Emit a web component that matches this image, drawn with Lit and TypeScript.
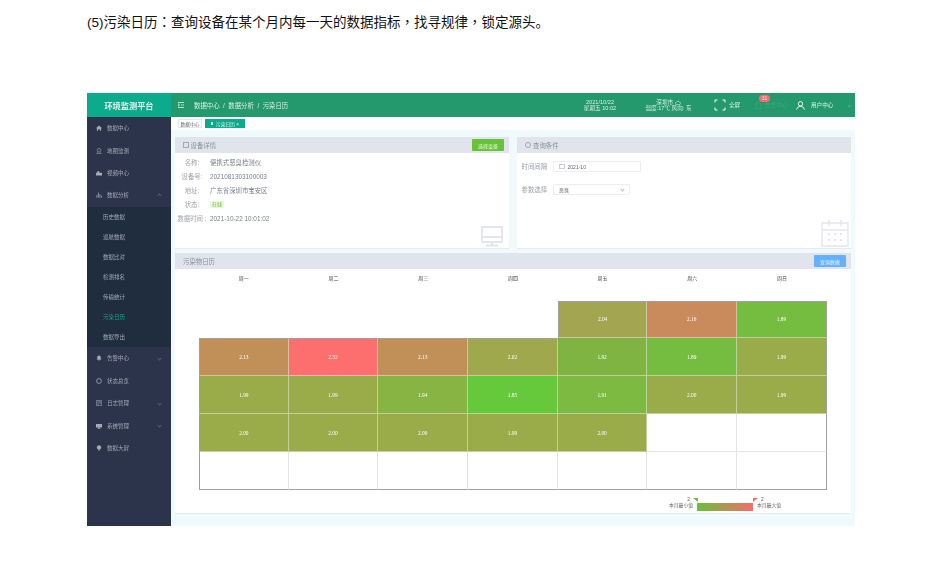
import { LitElement, html, css, svg } from 'lit';
import { customElement } from 'lit/decorators.js';

const menuIcons: Record<string, unknown> = {
  home: svg`<path d="M0 5.500 5 1l5 4.500H8.500V9.500h-2V7h-3v2.500h-2V5.500z" fill="currentColor"/>`,
  map: svg`<circle cx="5" cy="3.800" r="3" fill="none" stroke="currentColor"/><path d="M1 9.500h8M3 7l-1 2.500M7 7l1 2.500" stroke="currentColor" fill="none"/>`,
  video: svg`<path d="M0 4.500h10V9H0zM2 2h3.500v2.500H2z" fill="currentColor"/>`,
  chart: svg`<path d="M1.500 5v4.500M4 1v8.500M6.500 3.500v6M9 6v3.500" stroke="currentColor" stroke-width="1.300"/>`,
  bell: svg`<path d="M5 1a3 3 0 0 1 3 3v3l1 1H1l1-1V4a3 3 0 0 1 3-3zM4 9h2v1H4z" fill="currentColor"/>`,
  status: svg`<circle cx="5" cy="5" r="4" fill="none" stroke="currentColor" stroke-width="1.300"/>`,
  log: svg`<path d="M1 .5h8v9H1zM3.500 .5v9M5 3h3M5 5h3" fill="none" stroke="currentColor"/>`,
  system: svg`<path d="M0 1.500h10v6H0zM3 8h4v1.500H3z" fill="currentColor"/>`,
  screen: svg`<circle cx="5" cy="4.200" r="3.600" fill="currentColor"/><path d="M5 7v3" stroke="currentColor" stroke-width="1.500"/>`,
};

const menuTop = [
  { label: '数据中心', icon: 'home' },
  { label: '地图监测', icon: 'map' },
  { label: '视频中心', icon: 'video' },
];
const subItems = ['历史数据', '巡航数据', '数据比对', '检测排名', '传输统计', '污染日历', '数据导出'];
const menuBottom = [
  { label: '告警中心', icon: 'bell', arrow: true },
  { label: '状态总览', icon: 'status' },
  { label: '日志管理', icon: 'log', arrow: true },
  { label: '系统管理', icon: 'system', arrow: true },
  { label: '数据大屏', icon: 'screen' },
];
const crumbs = ['数据中心', '数据分析', '污染日历'];
const weekdays = ['周一', '周二', '周三', '周四', '周五', '周六', '周日'];

type Cell = [string, string] | null;
const days: Cell[] = [
  null, null, null, null, ['2.04', '#a4a550'], ['2.16', '#c98a5c'], ['1.89', '#74bd40'],
  ['2.13', '#c19058'], ['2.32', '#fd6e6e'], ['2.13', '#c19058'], ['2.02', '#9fa84c'], ['1.92', '#7fb443'], ['1.89', '#74bd40'], ['1.99', '#9aab49'],
  ['1.99', '#9aab49'], ['1.99', '#9aab49'], ['1.94', '#88b444'], ['1.85', '#66c93c'], ['1.91', '#7cba42'], ['2.00', '#9aab49'], ['1.99', '#9aab49'],
  ['2.00', '#9aab49'], ['2.00', '#9aab49'], ['2.00', '#9aab49'], ['1.99', '#9aab49'], ['2.00', '#9aab49'], null, null,
  null, null, null, null, null, null, null,
];

@customElement('app-root')
export class AppRoot extends LitElement {
  static styles = css`
    :host {
      display: block;
      width: 944px;
      height: 564px;
      background: #fff;
      font-family: "Liberation Sans", "Noto Sans CJK SC", sans-serif;
      overflow: hidden;
    }
    .caption {
      height: 93px;
      box-sizing: border-box;
      padding: 14px 0 0 87px;
      font-family: "Liberation Sans", "Noto Sans CJK TC", sans-serif;
      font-size: 13.5px;
      line-height: 18px;
      color: #111;
    }
    .caption span {
      font-family: "Liberation Sans", "Noto Sans CJK SC", sans-serif;
    }
    .frame {
      margin-left: 87px;
      width: 768px;
      height: 433px;
      display: flex;
      background: #f0f9fc;
      filter: blur(0.5px);
    }
    .side {
      width: 84px;
      flex: none;
      background: #2b344a;
      color: #a5abb8;
      font-size: 5.500px;
    }
    .logo {
      height: 24px;
      background: #0cab8b;
      color: #e4f5ee;
      font-size: 8.200px;
      font-weight: bold;
      display: flex;
      align-items: center;
      justify-content: center;
    }
    .item {
      height: 22.4px;
      display: flex;
      align-items: center;
      gap: 5px;
      padding-left: 9px;
      padding-right: 10px;
    }
    .item svg {
      width: 6px;
      height: 6px;
      flex: none;
    }
    .item span {
      flex: 1;
    }
    .arrow {
      width: 2px;
      height: 2px;
      border-right: 0.6px solid #566072;
      border-bottom: 0.6px solid #566072;
      transform: rotate(45deg);
    }
    .arrow.up {
      transform: rotate(225deg);
    }
    .sub {
      background: #1f2d3f;
    }
    .sub div {
      height: 20.1px;
      display: flex;
      align-items: center;
      padding-left: 16px;
    }
    .sub .on {
      color: #0cab8b;
    }
    .main {
      flex: 1;
      min-width: 0;
      display: flex;
      flex-direction: column;
    }
    .top {
      height: 24px;
      flex: none;
      background: #23996d;
      color: #dcefe7;
      font-size: 5.600px;
      display: flex;
      align-items: center;
      padding-left: 7px;
    }
    .crumbs {
      margin-left: 10px;
      width: 376px;
      font-size: 6.400px;
    }
    .crumbs i {
      font-style: normal;
      margin: 0 3.500px;
    }
    .clock,
    .weather {
      width: 60px;
      text-align: center;
      line-height: 6px;
    }
    .weather {
      margin-left: 8.500px;
    }
    .weather svg {
      vertical-align: -0.5px;
    }
    .full {
      display: flex;
      align-items: center;
      gap: 3px;
      margin-left: 15.500px;
      width: 41px;
    }
    .alarm {
      position: relative;
      display: flex;
      align-items: center;
      gap: 3px;
      color: #3aa96f;
      width: 41px;
    }
    .badge {
      position: absolute;
      left: 4px;
      top: -6px;
      width: 11px;
      height: 7px;
      border-radius: 4px;
      background: #f56c6c;
      color: #fde;
      font-size: 5px;
      line-height: 7px;
      text-align: center;
    }
    .user {
      display: flex;
      align-items: center;
      gap: 6px;
    }
    .user .arrow {
      margin-left: 9px;
      border-color: #4fae86;
    }
    .tabs {
      height: 13px;
      flex: none;
      box-sizing: border-box;
      background: #fff;
      display: flex;
      align-items: center;
      gap: 3px;
      padding-left: 7px;
      font-size: 4.800px;
    }
    .tab {
      height: 9px;
      width: 24px;
      box-sizing: border-box;
      display: flex;
      align-items: center;
      justify-content: center;
      border: 1px solid #e4e8ee;
      color: #666;
    }
    .tab.on {
      width: 40px;
      gap: 2.500px;
      background: #0cab8b;
      border-color: #0cab8b;
      color: #e4f5ee;
    }
    .tab i {
      width: 2.500px;
      height: 2.500px;
      border-radius: 50%;
      background: #fff;
    }
    .body {
      flex: 1;
      padding: 7px 4px 12px;
      display: flex;
      flex-direction: column;
      gap: 4px;
      min-height: 0;
    }
    .row {
      display: flex;
      gap: 8px;
      height: 112px;
      flex: none;
    }
    .panel {
      background: #fff;
      position: relative;
      display: flex;
      flex-direction: column;
      box-sizing: border-box;
      border-bottom: 1px solid #e6eaf0;
    }
    .panel.half {
      width: 334px;
    }
    .panel.calendar {
      flex: 1;
      min-height: 0;
    }
    .head {
      height: 16px;
      flex: none;
      background: #e1e4ec;
      color: #8a8f99;
      font-size: 6.400px;
      display: flex;
      align-items: center;
      justify-content: space-between;
      padding: 0 5px 0 8px;
    }
    .head b {
      font-weight: normal;
      display: flex;
      align-items: center;
      gap: 2px;
    }
    .sq {
      width: 3.500px;
      height: 3.500px;
      border: 0.8px solid #a4a8b1;
    }
    .dot {
      width: 4px;
      height: 4px;
      border: 0.8px solid #a4a8b1;
      border-radius: 50%;
    }
    .btn {
      height: 12px;
      width: 32px;
      border-radius: 1px;
      color: #e9f7df;
      font-size: 5px;
      display: flex;
      align-items: center;
      justify-content: center;
      background: #67c23a;
    }
    .btn.blue {
      background: #66b1ff;
    }
    .fields {
      padding: 2px 0 0 2px;
      font-size: 6.400px;
      color: #7a7f88;
    }
    .field {
      display: flex;
      align-items: center;
      height: 14.200px;
    }
    .field label {
      width: 30px;
      margin-right: 3px;
      text-align: center;
      white-space: nowrap;
      color: #a0a4ad;
    }
    .tag {
      background: #eaf8e0;
      color: #67c23a;
      font-size: 5px;
      padding: 0 2px;
      line-height: 7px;
      border-radius: 1px;
    }
    .watermark {
      position: absolute;
      right: 5px;
      bottom: 1px;
    }
    .watermark.cal {
      right: 2px;
    }
    .form {
      padding: 8px 0 0 4.500px;
      font-size: 6.400px;
      color: #9a9fa8;
      display: flex;
      flex-direction: column;
      gap: 12px;
    }
    .form > div {
      display: flex;
      align-items: center;
      gap: 6px;
    }
    .input {
      height: 11px;
      box-sizing: border-box;
      border: 1px solid #eceef2;
      border-radius: 1px;
      display: flex;
      align-items: center;
      justify-content: space-between;
      padding: 0 5px;
      font-size: 5px;
      color: #666;
    }
    .input.date {
      width: 88px;
      justify-content: flex-start;
      gap: 3px;
    }
    .input.select {
      width: 77px;
    }
    .input .sq {
      border-color: #ccd;
    }
    .input .arrow {
      border-color: #b3b7bf;
    }
    .week {
      display: grid;
      grid-template-columns: repeat(7, 89.7px);
      padding: 6px 0 0 24px;
      height: 25.500px;
      font-size: 5px;
      color: #444;
      text-align: center;
      line-height: 7px;
      flex: none;
    }
    .grid {
      margin-left: 24px;
      display: grid;
      grid-template-columns: repeat(7, 89.7px);
      grid-auto-rows: 37.900px;
      width: 628px;
    }
    .cell {
      box-sizing: border-box;
      border-right: 1px solid rgba(235, 235, 225, 0.55);
      border-bottom: 1px solid rgba(235, 235, 225, 0.55);
      color: #fff;
      font-size: 5.400px;
      font-family: "Liberation Serif", serif;
      display: flex;
      align-items: center;
      justify-content: center;
    }
    .cell.blank {
      border-right-color: #e4e4e4;
      border-bottom-color: #e4e4e4;
    }
    .cell.none {
      border-color: transparent;
    }
    .cell.c0 {
      border-left: 1px solid #a0a0a0;
    }
    .cell.c6 {
      border-right: 1px solid #a0a0a0;
    }
    .cell.lastrow {
      border-bottom: 1px solid #a0a0a0;
    }
    .cell.ceil {
      border-top: 1px solid #a0a0a0;
    }
    .legend {
      display: flex;
      justify-content: flex-end;
      align-items: flex-end;
      padding-top: 7px;
      margin-right: 70px;
      font-size: 4.800px;
      color: #666;
      line-height: 6px;
    }
    .legend .end {
      display: flex;
      flex-direction: column;
      margin-bottom: 2px;
      white-space: nowrap;
    }
    .legend .end.min {
      text-align: right;
      margin-right: 4px;
    }
    .legend .end.max {
      margin-left: 4px;
      padding-bottom: 0;
    }
    .legend .end.max span:first-child {
      padding-left: 4px;
    }
    .legend .end.min span:first-child {
      padding-right: 3px;
    }
    .ramp {
      position: relative;
      width: 56px;
      height: 8px;
      background: linear-gradient(90deg, #67c23a, #f56c6c);
    }
    .flag {
      position: absolute;
      top: -5px;
      width: 5px;
      height: 4px;
    }
    .flag.min {
      left: -4px;
      background: #67c23a;
      clip-path: polygon(0 0, 100% 0, 100% 100%);
    }
    .flag.max {
      right: -5px;
      background: #f56c6c;
      clip-path: polygon(0 0, 100% 0, 0 100%);
    }
  `;

  cellClass(i: number, c: Cell) {
    const col = i % 7;
    const row = Math.floor(i / 7);
    const cls = ['cell'];
    if (c === null) cls.push(row === 0 ? 'none' : 'blank');
    if ((row > 0 && col === 0) || (row === 0 && col === 4)) cls.push('c0');
    if (col === 6) cls.push('c6');
    if (row === 4) cls.push('lastrow');
    if ((row === 0 && col >= 4) || (row === 1 && col < 4)) cls.push('ceil');
    return cls.join(' ');
  }

  icon(name: string) {
    return html`<svg viewBox="0 0 10 10">${menuIcons[name]}</svg>`;
  }

  render() {
    return html`
      <div class="caption">(5)污染日历：查询设备在某个月内每一天的数据指标，找寻规律，锁定源头<span>。</span></div>
      <div class="frame">
        <aside class="side">
          <div class="logo">环境监测平台</div>
          ${menuTop.map((m) => html`<div class="item">${this.icon(m.icon)}<span>${m.label}</span></div>`)}
          <div class="item">${this.icon('chart')}<span>数据分析</span><i class="arrow up"></i></div>
          <div class="sub">
            ${subItems.map((s) => html`<div class=${s === '污染日历' ? 'on' : ''}>${s}</div>`)}
          </div>
          ${menuBottom.map((m) => html`<div class="item">${this.icon(m.icon)}<span>${m.label}</span>${m.arrow ? html`<i class="arrow"></i>` : ''}</div>`)}
        </aside>
        <div class="main">
          <header class="top">
            <svg width="6" height="6" viewBox="0 0 6 6"><path d="M0 .5h6M3 3h3M0 5.500h6M0 1.500v3L1.500 3z" stroke="#dcefe7" stroke-width=".8" fill="none"/></svg>
            <div class="crumbs">${crumbs.map((c, i) => html`${i > 0 ? html`<i>/</i>` : ''}${c}`)}</div>
            <div class="clock">2021/10/22<br />星期五 10:02</div>
            <div class="weather">深圳市 <svg width="6" height="5" viewBox="0 0 6 5"><path d="M1.500 4.500a1.200 1.200 0 0 1 0-2.400 1.600 1.600 0 0 1 3 .2 1.100 1.100 0 0 1 0 2.200z" fill="none" stroke="#dcefe7" stroke-width=".6"/></svg><br />温度:17℃ 风向: 东</div>
            <div class="full">
              <svg width="12" height="12" viewBox="0 0 12 12"><path d="M1 3.500V1h2.500M8.500 1H11v2.500M11 8.500V11H8.500M3.500 11H1V8.500" fill="none" stroke="#fff" stroke-width="1"/></svg>
              全屏
            </div>
            <div class="alarm">
              <svg width="7" height="9" viewBox="0 0 8 10"><path d="M4 1a2.600 2.600 0 0 1 2.600 2.600V7L8 8.400H0L1.400 7V3.600A2.600 2.600 0 0 1 4 1z" fill="none" stroke="#3aa96f" stroke-width=".8"/></svg>
              告警中心
              <span class="badge">31</span>
            </div>
            <div class="user">
              <svg width="9" height="9" viewBox="0 0 9 9"><circle cx="4.500" cy="2.800" r="2.200" fill="none" stroke="#fff" stroke-width=".9"/><path d="M.7 8.600c.5-2.400 2-3.300 3.800-3.300s3.300.9 3.800 3.300" fill="none" stroke="#fff" stroke-width=".9"/></svg>
              用户中心
              <i class="arrow"></i>
            </div>
          </header>
          <nav class="tabs">
            <div class="tab">数据中心</div>
            <div class="tab on"><i></i>污染日历 ×</div>
          </nav>
          <div class="body">
            <div class="row">
              <section class="panel half">
                <div class="head"><b><i class="sq"></i>设备详情</b><span class="btn">选择设备</span></div>
                <div class="fields">
                  <div class="field"><label>名称:</label>便携式恶臭检测仪</div>
                  <div class="field"><label>设备号:</label>2021081303100003</div>
                  <div class="field"><label>地址:</label>广东省深圳市宝安区</div>
                  <div class="field"><label>状态:</label><span class="tag">在线</span></div>
                  <div class="field"><label>数据时间 :</label>2021-10-22 10:01:02</div>
                </div>
                <svg class="watermark" width="24" height="22" viewBox="0 0 24 22"><path d="M2 2h20v15H2zM2 12h20M12 17v3M6 20.500h12" fill="none" stroke="#e3e6ee" stroke-width="2"/></svg>
              </section>
              <section class="panel half">
                <div class="head"><b><i class="dot"></i>查询条件</b></div>
                <div class="form">
                  <div>时间间隔 <span class="input date"><i class="sq"></i>2021-10</span></div>
                  <div>参数选择 <span class="input select">恶臭<i class="arrow"></i></span></div>
                </div>
                <svg class="watermark cal" width="28" height="28" viewBox="0 0 28 28"><path d="M1 4h26v23H1zM1 11h26M8 1v6M20 1v6" fill="none" stroke="#e3e6ee" stroke-width="1.500"/><path d="M7 15h2M13 15h2M19 15h2M7 21h2M13 21h2M19 21h2" stroke="#e3e6ee" stroke-width="2"/></svg>
              </section>
            </div>
            <section class="panel calendar">
              <div class="head"><b>污染物日历</b><span class="btn blue">查询数据</span></div>
              <div class="week">${weekdays.map((w) => html`<div>${w}</div>`)}</div>
              <div class="grid">
                ${days.map((c, i) => html`<div class=${this.cellClass(i, c)} style=${c ? `background:${c[1]}` : ''}>${c ? c[0] : ''}</div>`)}
              </div>
              <div class="legend">
                <div class="end min"><span>2</span><span>本月最小值</span></div>
                <div class="ramp"><i class="flag min"></i><i class="flag max"></i></div>
                <div class="end max"><span>2</span><span>本月最大值</span></div>
              </div>
            </section>
          </div>
        </div>
      </div>
    `;
  }
}
